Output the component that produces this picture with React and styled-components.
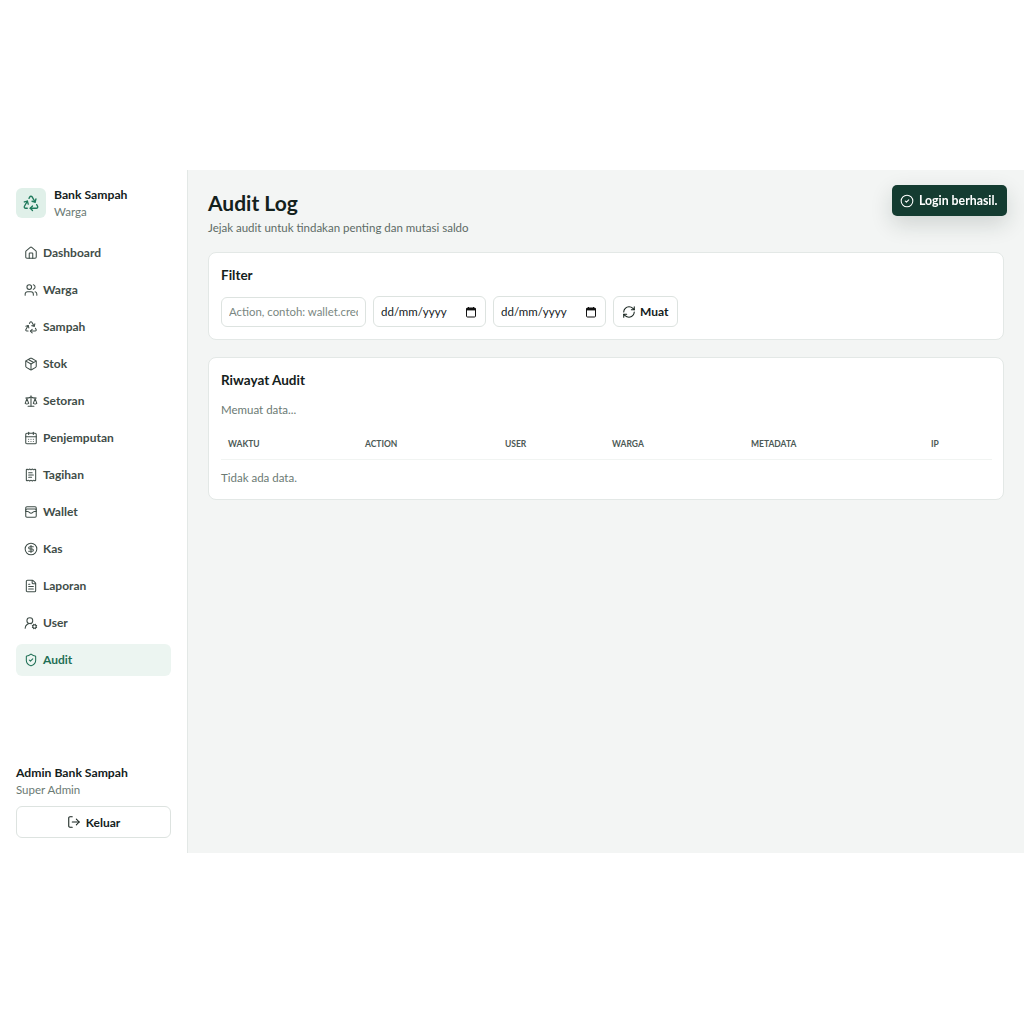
import React from 'react';
import styled, { createGlobalStyle } from 'styled-components';
import {
  Recycle, House, Users, Package, Scale, CalendarDays, ReceiptText, WalletCards,
  CircleDollarSign, FileText, UserRoundCog, ShieldCheck, LogOut, RefreshCw, CircleCheck,
} from 'lucide-react';

const fontStack = '"Lato", "Noto Sans", sans-serif';

const GlobalStyle = createGlobalStyle`
  * { box-sizing: border-box; }
  body {
    margin: 0;
    background: #fff;
    font-family: ${fontStack};
    color: #14211c;
  }
  #root {
    min-height: 1023px;
    display: flex;
    align-items: center;
  }
`;

const Shell = styled.div`
  width: 100%;
  height: 683px;
  display: flex;
  background: #f3f5f4;
`;

const Sidebar = styled.aside`
  width: 188px;
  flex-shrink: 0;
  background: #fff;
  border-right: 1px solid #e3e8e6;
  padding: 17px 16px 15px 16px;
  display: flex;
  flex-direction: column;
`;

const Brand = styled.div`
  display: flex;
  align-items: center;
  gap: 8px;
  height: 32px;
  margin-bottom: 18px;
`;

const BrandIcon = styled.div`
  width: 30px;
  height: 30px;
  border-radius: 6px;
  background: #e0f0e9;
  color: #1f7a5c;
  display: flex;
  align-items: center;
  justify-content: center;
`;

const BrandName = styled.div`
  font-size: 12.2px;
  font-weight: 700;
  line-height: 16px;
`;

const Muted = styled.div`
  font-size: 11.5px;
  line-height: 17px;
  color: #6b7a74;
`;

const Nav = styled.nav`
  display: flex;
  flex-direction: column;
  gap: 5px;
  flex: 1;
`;

const NavItem = styled.a`
  height: 32px;
  display: flex;
  align-items: center;
  gap: 5px;
  padding: 0 0 1px 8px;
  border-radius: 6px;
  font-size: 12px;
  font-weight: 700;
  color: ${(p) => (p.$active ? '#1f6f55' : '#3f4d48')};
  background: ${(p) => (p.$active ? '#ecf5f1' : 'transparent')};
`;

const AdminName = styled.div`
  font-size: 12.2px;
  font-weight: 700;
  line-height: 17px;
`;

const LogoutButton = styled.button`
  width: 100%;
  height: 32px;
  margin-top: 8px;
  display: flex;
  align-items: center;
  justify-content: center;
  gap: 5px;
  background: #fff;
  border: 1px solid #dde3e0;
  border-radius: 6px;
  font: 700 12px ${fontStack};
  color: #14211c;
`;

const Main = styled.main`
  flex: 1;
  min-width: 0;
  padding: 19px 20px 0 20px;
`;

const Title = styled.h1`
  margin: 0;
  font-size: 21px;
  font-weight: 700;
  line-height: 27px;
`;

const Subtitle = styled.p`
  margin: 3px 0 16px;
  font-size: 11.5px;
  line-height: 17px;
  color: #5d6b66;
`;

const Card = styled.section`
  background: #fff;
  border: 1px solid #e3e8e6;
  border-radius: 8px;
  padding: 13px 12px 12px;
  margin-bottom: 17px;
`;

const CardTitle = styled.h2`
  margin: 0;
  font-size: 13.5px;
  font-weight: 700;
  line-height: 18px;
`;

const FilterRow = styled.div`
  display: flex;
  align-items: center;
  gap: 7px;
  margin-top: 12px;
`;

const TextInput = styled.input`
  width: 145px;
  height: 30px;
  padding: 0 7px;
  background: #fff;
  border: 1px solid #dde3e0;
  border-radius: 6px;
  font: 400 11.4px ${fontStack};
  &::placeholder { color: #7a8782; }
`;

const DateField = styled.div`
  width: 113px;
  height: 31px;
  padding: 0 8px 0 7px;
  display: flex;
  align-items: center;
  justify-content: space-between;
  background: #fff;
  border: 1px solid #dde3e0;
  border-radius: 6px;
  font-size: 11.5px;
  color: #14211c;
`;

const LoadButton = styled.button`
  height: 31px;
  padding: 0 9px 0 8px;
  display: flex;
  align-items: center;
  gap: 4px;
  background: #fff;
  border: 1px solid #dde3e0;
  border-radius: 6px;
  font: 700 12px ${fontStack};
  color: #14211c;
`;

const Note = styled.p`
  margin: ${(p) => p.$margin};
  font-size: 11.5px;
  line-height: 17px;
  color: #6b7a74;
`;

const Table = styled.table`
  width: 100%;
  border-collapse: collapse;
  table-layout: fixed;
`;

const Th = styled.th`
  width: ${(p) => p.$w}px;
  height: 30px;
  padding: 0 7px;
  text-align: left;
  font-size: 8.5px;
  font-weight: 700;
  color: #4c5955;
  border-bottom: 1px solid #f1f4f2;
`;

const Toast = styled.div`
  position: fixed;
  top: 185px;
  right: 17px;
  height: 31px;
  width: 115px;
  padding-left: 8px;
  display: flex;
  align-items: center;
  gap: 5px;
  border-radius: 5px;
  background: #143c31;
  color: #fff;
  font-size: 12.3px;
  font-weight: 700;
  white-space: nowrap;
  box-shadow: 0 8px 22px rgba(20, 40, 34, 0.16);
`;

const navItems = [
  ['Dashboard', House],
  ['Warga', Users],
  ['Sampah', Recycle],
  ['Stok', Package],
  ['Setoran', Scale],
  ['Penjemputan', CalendarDays],
  ['Tagihan', ReceiptText],
  ['Wallet', WalletCards],
  ['Kas', CircleDollarSign],
  ['Laporan', FileText],
  ['User', UserRoundCog],
  ['Audit', ShieldCheck],
];

const columns = [
  ['WAKTU', 137],
  ['ACTION', 140],
  ['USER', 107],
  ['WARGA', 139],
  ['METADATA', 180],
  ['IP', 68],
];

// same glyph as the browser's date picker button
const PickerIcon = () => (
  <svg width="12" height="12" viewBox="0 0 12 12" fill="none">
    <rect x="1.5" y="2" width="9" height="9" rx="1" stroke="#111" strokeWidth="1" />
    <rect x="1.5" y="2" width="9" height="2.4" fill="#111" />
    <path d="M3.5 1v1.5M8.5 1v1.5" stroke="#111" strokeWidth="1" />
  </svg>
);

const DateBox = () => (
  <DateField>
    <span>dd/mm/yyyy</span>
    <PickerIcon />
  </DateField>
);

export default function App() {
  return (
    <>
      <GlobalStyle />
      <Shell>
        <Sidebar>
          <Brand>
            <BrandIcon><Recycle size={18} strokeWidth={1.8} /></BrandIcon>
            <div>
              <BrandName>Bank Sampah</BrandName>
              <Muted>Warga</Muted>
            </div>
          </Brand>
          <Nav>
            {navItems.map(([label, Icon]) => (
              <NavItem key={label} $active={label === 'Audit'}>
                <Icon size={14} strokeWidth={1.8} />
                {label}
              </NavItem>
            ))}
          </Nav>
          <AdminName>Admin Bank Sampah</AdminName>
          <Muted>Super Admin</Muted>
          <LogoutButton><LogOut size={14} strokeWidth={1.8} />Keluar</LogoutButton>
        </Sidebar>
        <Main>
          <Title>Audit Log</Title>
          <Subtitle>Jejak audit untuk tindakan penting dan mutasi saldo</Subtitle>
          <Card>
            <CardTitle>Filter</CardTitle>
            <FilterRow>
              <TextInput placeholder="Action, contoh: wallet.credit" />
              <DateBox />
              <DateBox />
              <LoadButton><RefreshCw size={14} strokeWidth={1.8} />Muat</LoadButton>
            </FilterRow>
          </Card>
          <Card>
            <CardTitle>Riwayat Audit</CardTitle>
            <Note $margin="12px 0 11px">Memuat data...</Note>
            <Table>
              <thead>
                <tr>
                  {columns.map(([label, w]) => <Th key={label} $w={w}>{label}</Th>)}
                </tr>
              </thead>
            </Table>
            <Note $margin="9px 0 1px">Tidak ada data.</Note>
          </Card>
        </Main>
      </Shell>
      <Toast><CircleCheck size={14} strokeWidth={1.8} />Login berhasil.</Toast>
    </>
  );
}
